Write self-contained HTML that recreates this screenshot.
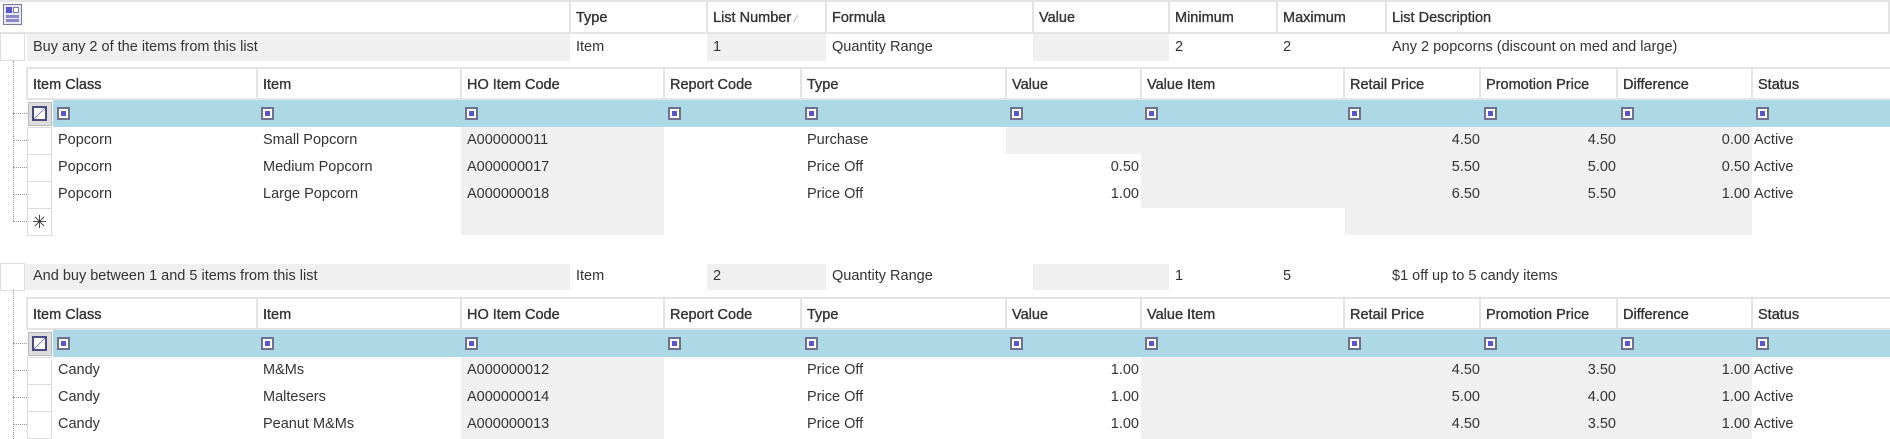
<!DOCTYPE html>
<html><head><meta charset="utf-8"><style>
body{margin:0;width:1890px;height:439px;background:#fff;position:relative;overflow:hidden;font-family:"Liberation Sans",sans-serif;font-size:14.5px;color:#333}
div{position:absolute;box-sizing:border-box}
.t{white-space:nowrap;line-height:27px;padding-left:5px}
.h{color:#333;-webkit-text-stroke:0.35px #333;margin-top:2px}
.g{background:#f0f0f0}
.bl{background:#add8e6}
.vl{width:2px;background:#e4e4e4}
.hl{height:2px;background:#e4e4e4}
.f{width:13px;height:13px;border:2px solid #6f6f8f;background:#fff}
.f::after{content:"";position:absolute;left:2px;top:2px;width:5px;height:5px;background:#5a55d0}
.sel{width:25px;border:1px solid #ddd;background:#fff}
.r{text-align:right;padding-right:2px;padding-left:0}
.dot{border-left:1px dotted #999}
.doth{border-top:1px dotted #999;height:1px}
</style></head><body>
<!-- top header -->
<div class="hl" style="left:0;top:0;width:1890px"></div>
<div style="left:3px;top:4px;width:19px;height:21px;border:1px solid #7a7aa0;background:#e8e8f4"></div>
<div style="left:6px;top:7px;width:6px;height:6px;background:#5a55d0"></div>
<div style="left:13px;top:7px;width:6px;height:6px;border:1px solid #7a7aa0;background:#fff"></div>
<div style="left:6px;top:15px;width:13px;height:3px;background:#8a8ac8"></div>
<div style="left:6px;top:19px;width:13px;height:3px;background:#8a8ac8"></div>
<div class="hl" style="left:0;top:32px;width:1890px"></div>
<div class="vl" style="left:569px;top:2px;height:30px"></div>
<div class="vl" style="left:706px;top:2px;height:30px"></div>
<div class="vl" style="left:825px;top:2px;height:30px"></div>
<div class="vl" style="left:1032px;top:2px;height:30px"></div>
<div class="vl" style="left:1168px;top:2px;height:30px"></div>
<div class="vl" style="left:1276px;top:2px;height:30px"></div>
<div class="vl" style="left:1385px;top:2px;height:30px"></div>
<div class="vl" style="left:1888px;top:2px;height:30px"></div>
<div class="t h" style="left:571px;top:3px">Type</div>
<div class="t h" style="left:708px;top:3px">List Number <span style="font-size:10px;color:#999;-webkit-text-stroke:0">⁄</span></div>
<div class="t h" style="left:827px;top:3px">Formula</div>
<div class="t h" style="left:1034px;top:3px">Value</div>
<div class="t h" style="left:1170px;top:3px">Minimum</div>
<div class="t h" style="left:1278px;top:3px">Maximum</div>
<div class="t h" style="left:1387px;top:3px">List Description</div>

<!-- group 1 row -->
<div class="sel" style="left:0;top:33px;height:28px"></div>
<div class="g" style="left:27px;top:34px;width:543px;height:27px"></div>
<div class="g" style="left:707px;top:34px;width:119px;height:27px"></div>
<div class="g" style="left:1033px;top:34px;width:136px;height:27px"></div>
<div class="t" style="left:28px;top:34px">Buy any 2 of the items from this list</div>
<div class="t" style="left:571px;top:34px">Item</div>
<div class="t" style="left:708px;top:34px">1</div>
<div class="t" style="left:827px;top:34px">Quantity Range</div>
<div class="t" style="left:1170px;top:34px">2</div>
<div class="t" style="left:1278px;top:34px">2</div>
<div class="t" style="left:1387px;top:34px">Any 2 popcorns (discount on med and large)</div>

<!-- group 2 row -->
<div class="sel" style="left:0;top:263px;height:28px"></div>
<div class="g" style="left:25px;top:264px;width:545px;height:26px"></div>
<div class="g" style="left:707px;top:264px;width:119px;height:26px"></div>
<div class="g" style="left:1033px;top:264px;width:136px;height:26px"></div>
<div class="t" style="left:28px;top:263px">And buy between 1 and 5 items from this list</div>
<div class="t" style="left:571px;top:263px">Item</div>
<div class="t" style="left:708px;top:263px">2</div>
<div class="t" style="left:827px;top:263px">Quantity Range</div>
<div class="t" style="left:1170px;top:263px">1</div>
<div class="t" style="left:1278px;top:263px">5</div>
<div class="t" style="left:1387px;top:263px">$1 off up to 5 candy items</div>

<!-- tree lines -->
<div class="dot" style="left:13px;top:61px;height:160px"></div>
<div class="doth" style="left:13px;top:113px;width:14px"></div>
<div class="doth" style="left:13px;top:140px;width:14px"></div>
<div class="doth" style="left:13px;top:167px;width:14px"></div>
<div class="doth" style="left:13px;top:194px;width:14px"></div>
<div class="doth" style="left:13px;top:221px;width:14px"></div>
<div class="dot" style="left:13px;top:290px;height:149px"></div>
<div class="doth" style="left:13px;top:343px;width:14px"></div>
<div class="doth" style="left:13px;top:370px;width:14px"></div>
<div class="doth" style="left:13px;top:397px;width:14px"></div>
<div class="doth" style="left:13px;top:424px;width:14px"></div>

<!-- GROUP 1 SUBGRID -->
<div class="hl" style="left:27px;top:67px;width:1863px"></div>
<div class="vl" style="left:26px;top:67px;height:33px"></div>
<div class="vl" style="left:256px;top:68px;height:31px"></div>
<div class="vl" style="left:460px;top:68px;height:31px"></div>
<div class="vl" style="left:663px;top:68px;height:31px"></div>
<div class="vl" style="left:800px;top:68px;height:31px"></div>
<div class="vl" style="left:1005px;top:68px;height:31px"></div>
<div class="vl" style="left:1140px;top:68px;height:31px"></div>
<div class="vl" style="left:1343px;top:68px;height:31px"></div>
<div class="vl" style="left:1479px;top:68px;height:31px"></div>
<div class="vl" style="left:1616px;top:68px;height:31px"></div>
<div class="vl" style="left:1751px;top:68px;height:31px"></div>
<div class="hl" style="left:27px;top:98px;width:1863px"></div>
<div class="t h" style="left:28px;top:70px">Item Class</div>
<div class="t h" style="left:258px;top:70px">Item</div>
<div class="t h" style="left:462px;top:70px">HO Item Code</div>
<div class="t h" style="left:665px;top:70px">Report Code</div>
<div class="t h" style="left:802px;top:70px">Type</div>
<div class="t h" style="left:1007px;top:70px">Value</div>
<div class="t h" style="left:1142px;top:70px">Value Item</div>
<div class="t h" style="left:1345px;top:70px">Retail Price</div>
<div class="t h" style="left:1481px;top:70px">Promotion Price</div>
<div class="t h" style="left:1618px;top:70px">Difference</div>
<div class="t h" style="left:1753px;top:70px">Status</div>
<div class="bl" style="left:53px;top:100px;width:1837px;height:27px"></div>
<div style="left:28px;top:102px;width:24px;height:24px;background:#ddd;border:1px solid #bbb"></div>
<div style="left:32px;top:106px;width:15px;height:15px;border:2px solid #4a4a80;background:linear-gradient(135deg,#fff 45%,#6a66d8 50%,#fff 55%)"></div>
<div class="f" style="left:57px;top:107px"></div>
<div class="f" style="left:261px;top:107px"></div>
<div class="f" style="left:465px;top:107px"></div>
<div class="f" style="left:668px;top:107px"></div>
<div class="f" style="left:805px;top:107px"></div>
<div class="f" style="left:1010px;top:107px"></div>
<div class="f" style="left:1145px;top:107px"></div>
<div class="f" style="left:1348px;top:107px"></div>
<div class="f" style="left:1484px;top:107px"></div>
<div class="f" style="left:1621px;top:107px"></div>
<div class="f" style="left:1756px;top:107px"></div>
<div class="g" style="left:461px;top:127px;width:203px;height:108px"></div>
<div class="g" style="left:1006px;top:127px;width:135px;height:27px"></div>
<div class="g" style="left:1141px;top:127px;width:611px;height:81px"></div>
<div class="g" style="left:1345px;top:208px;width:407px;height:27px"></div>
<div class="sel" style="left:27px;top:127px;height:28px"></div>
<div class="sel" style="left:27px;top:154px;height:28px"></div>
<div class="sel" style="left:27px;top:181px;height:28px"></div>
<div class="sel" style="left:27px;top:208px;height:28px;text-align:center;line-height:26px;font-size:18px">✳</div>

<div class="t" style="left:53px;top:127px">Popcorn</div>
<div class="t" style="left:258px;top:127px">Small Popcorn</div>
<div class="t" style="left:462px;top:127px">A000000011</div>
<div class="t" style="left:802px;top:127px">Purchase</div>
<div class="t r" style="left:1346px;top:127px;width:136px">4.50</div>
<div class="t r" style="left:1482px;top:127px;width:136px">4.50</div>
<div class="t r" style="left:1618px;top:127px;width:134px">0.00</div>
<div class="t" style="left:1749px;top:127px">Active</div>

<div class="t" style="left:53px;top:154px">Popcorn</div>
<div class="t" style="left:258px;top:154px">Medium Popcorn</div>
<div class="t" style="left:462px;top:154px">A000000017</div>
<div class="t" style="left:802px;top:154px">Price Off</div>
<div class="t r" style="left:1006px;top:154px;width:135px">0.50</div>
<div class="t r" style="left:1346px;top:154px;width:136px">5.50</div>
<div class="t r" style="left:1482px;top:154px;width:136px">5.00</div>
<div class="t r" style="left:1618px;top:154px;width:134px">0.50</div>
<div class="t" style="left:1749px;top:154px">Active</div>

<div class="t" style="left:53px;top:181px">Popcorn</div>
<div class="t" style="left:258px;top:181px">Large Popcorn</div>
<div class="t" style="left:462px;top:181px">A000000018</div>
<div class="t" style="left:802px;top:181px">Price Off</div>
<div class="t r" style="left:1006px;top:181px;width:135px">1.00</div>
<div class="t r" style="left:1346px;top:181px;width:136px">6.50</div>
<div class="t r" style="left:1482px;top:181px;width:136px">5.50</div>
<div class="t r" style="left:1618px;top:181px;width:134px">1.00</div>
<div class="t" style="left:1749px;top:181px">Active</div>

<!-- GROUP 2 SUBGRID -->
<div class="hl" style="left:27px;top:297px;width:1863px"></div>
<div class="vl" style="left:26px;top:297px;height:33px"></div>
<div class="vl" style="left:256px;top:298px;height:31px"></div>
<div class="vl" style="left:460px;top:298px;height:31px"></div>
<div class="vl" style="left:663px;top:298px;height:31px"></div>
<div class="vl" style="left:800px;top:298px;height:31px"></div>
<div class="vl" style="left:1005px;top:298px;height:31px"></div>
<div class="vl" style="left:1140px;top:298px;height:31px"></div>
<div class="vl" style="left:1343px;top:298px;height:31px"></div>
<div class="vl" style="left:1479px;top:298px;height:31px"></div>
<div class="vl" style="left:1616px;top:298px;height:31px"></div>
<div class="vl" style="left:1751px;top:298px;height:31px"></div>
<div class="hl" style="left:27px;top:328px;width:1863px"></div>
<div class="t h" style="left:28px;top:300px">Item Class</div>
<div class="t h" style="left:258px;top:300px">Item</div>
<div class="t h" style="left:462px;top:300px">HO Item Code</div>
<div class="t h" style="left:665px;top:300px">Report Code</div>
<div class="t h" style="left:802px;top:300px">Type</div>
<div class="t h" style="left:1007px;top:300px">Value</div>
<div class="t h" style="left:1142px;top:300px">Value Item</div>
<div class="t h" style="left:1345px;top:300px">Retail Price</div>
<div class="t h" style="left:1481px;top:300px">Promotion Price</div>
<div class="t h" style="left:1618px;top:300px">Difference</div>
<div class="t h" style="left:1753px;top:300px">Status</div>
<div class="bl" style="left:53px;top:330px;width:1837px;height:27px"></div>
<div style="left:28px;top:332px;width:24px;height:24px;background:#ddd;border:1px solid #bbb"></div>
<div style="left:32px;top:336px;width:15px;height:15px;border:2px solid #4a4a80;background:linear-gradient(135deg,#fff 45%,#6a66d8 50%,#fff 55%)"></div>
<div class="f" style="left:57px;top:337px"></div>
<div class="f" style="left:261px;top:337px"></div>
<div class="f" style="left:465px;top:337px"></div>
<div class="f" style="left:668px;top:337px"></div>
<div class="f" style="left:805px;top:337px"></div>
<div class="f" style="left:1010px;top:337px"></div>
<div class="f" style="left:1145px;top:337px"></div>
<div class="f" style="left:1348px;top:337px"></div>
<div class="f" style="left:1484px;top:337px"></div>
<div class="f" style="left:1621px;top:337px"></div>
<div class="f" style="left:1756px;top:337px"></div>
<div class="g" style="left:461px;top:357px;width:203px;height:82px"></div>
<div class="g" style="left:1141px;top:357px;width:611px;height:82px"></div>
<div class="sel" style="left:27px;top:357px;height:28px"></div>
<div class="sel" style="left:27px;top:384px;height:28px"></div>
<div class="sel" style="left:27px;top:411px;height:28px"></div>

<div class="t" style="left:53px;top:357px">Candy</div>
<div class="t" style="left:258px;top:357px">M&amp;Ms</div>
<div class="t" style="left:462px;top:357px">A000000012</div>
<div class="t" style="left:802px;top:357px">Price Off</div>
<div class="t r" style="left:1006px;top:357px;width:135px">1.00</div>
<div class="t r" style="left:1346px;top:357px;width:136px">4.50</div>
<div class="t r" style="left:1482px;top:357px;width:136px">3.50</div>
<div class="t r" style="left:1618px;top:357px;width:134px">1.00</div>
<div class="t" style="left:1749px;top:357px">Active</div>

<div class="t" style="left:53px;top:384px">Candy</div>
<div class="t" style="left:258px;top:384px">Maltesers</div>
<div class="t" style="left:462px;top:384px">A000000014</div>
<div class="t" style="left:802px;top:384px">Price Off</div>
<div class="t r" style="left:1006px;top:384px;width:135px">1.00</div>
<div class="t r" style="left:1346px;top:384px;width:136px">5.00</div>
<div class="t r" style="left:1482px;top:384px;width:136px">4.00</div>
<div class="t r" style="left:1618px;top:384px;width:134px">1.00</div>
<div class="t" style="left:1749px;top:384px">Active</div>

<div class="t" style="left:53px;top:411px">Candy</div>
<div class="t" style="left:258px;top:411px">Peanut M&amp;Ms</div>
<div class="t" style="left:462px;top:411px">A000000013</div>
<div class="t" style="left:802px;top:411px">Price Off</div>
<div class="t r" style="left:1006px;top:411px;width:135px">1.00</div>
<div class="t r" style="left:1346px;top:411px;width:136px">4.50</div>
<div class="t r" style="left:1482px;top:411px;width:136px">3.50</div>
<div class="t r" style="left:1618px;top:411px;width:134px">1.00</div>
<div class="t" style="left:1749px;top:411px">Active</div>
</body></html>
